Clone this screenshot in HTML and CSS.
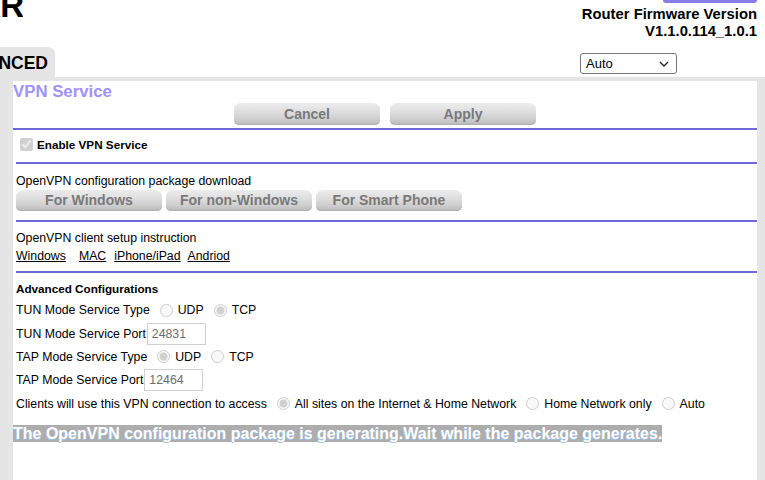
FILE: index.html
```html
<!DOCTYPE html>
<html>
<head>
<meta charset="utf-8">
<title>VPN Service</title>
<link rel="stylesheet" href="styles.css">
</head>
<body>
<header class="top">
  <div class="logo"><span>NETGEAR</span></div>
  <div class="fw">
    <div class="fw-bar"></div>
    <div class="fw-line">Router Firmware Version</div>
    <div class="fw-line">V1.1.0.114_1.0.1</div>
  </div>
</header>
<div class="tabrow">
  <div class="tab"><span>ADVANCED</span></div>
  <div class="lang">
    <select class="lang-sel"><option>Auto</option></select>
    <svg class="chev" width="10" height="6" viewBox="0 0 10 6"><path d="M1 1 L5 5 L9 1" fill="none" stroke="#222" stroke-width="1.4"/></svg>
  </div>
</div>
<div class="frame">
  <div class="panel">
    <div class="title">VPN Service</div>
    <div class="actions">
      <button class="btn btn-lg">Cancel</button>
      <button class="btn btn-lg">Apply</button>
    </div>
    <div class="rule"></div>
    <div class="body">
      <div class="enable">
        <input type="checkbox" checked disabled class="chk">
        <span class="b">Enable VPN Service</span>
      </div>
      <div class="rule"></div>
      <div class="sec sec-dl">
        <div class="line">OpenVPN configuration package download</div>
        <div class="btns">
          <button class="btn">For Windows</button>
          <button class="btn">For non-Windows</button>
          <button class="btn">For Smart Phone</button>
        </div>
      </div>
      <div class="rule"></div>
      <div class="sec sec-help">
        <div class="line">OpenVPN client setup instruction</div>
        <div class="links">
          <a href="#" class="l1">Windows</a>
          <a href="#" class="l2">MAC</a>
          <a href="#" class="l3">iPhone/iPad</a>
          <a href="#" class="l4">Andriod</a>
        </div>
      </div>
      <div class="rule"></div>
      <div class="sec sec-adv">
        <div class="line b">Advanced Configurations</div>
        <div class="rows">
          <div class="row r24">
            <span>TUN Mode Service Type</span>
            <input type="radio" name="tun" disabled class="rad"><span>UDP</span>
            <input type="radio" name="tun" disabled checked class="rad"><span>TCP</span>
          </div>
          <div class="row r23">
            <span>TUN Mode Service Port</span>
            <input type="text" class="port" value="24831" disabled>
          </div>
          <div class="row r23">
            <span>TAP Mode Service Type</span>
            <input type="radio" name="tap" disabled checked class="rad"><span>UDP</span>
            <input type="radio" name="tap" disabled class="rad"><span>TCP</span>
          </div>
          <div class="row r23">
            <span>TAP Mode Service Port</span>
            <input type="text" class="port" value="12464" disabled>
          </div>
          <div class="row r25">
            <span>Clients will use this VPN connection to access</span>
            <input type="radio" name="acc" disabled checked class="rad"><span>All sites on the Internet &amp; Home Network</span>
            <input type="radio" name="acc" disabled class="rad"><span>Home Network only</span>
            <input type="radio" name="acc" disabled class="rad"><span>Auto</span>
          </div>
        </div>
      </div>
    </div>
    <div class="msg"><span>The OpenVPN configuration package is generating.Wait while the package generates.</span></div>
  </div>
</div>
</body>
</html>
```

FILE: styles.css
```css
html, body {
  margin: 0;
  padding: 0;
  background: #fff;
}
body {
  font-family: "Liberation Sans", Arial, sans-serif;
  font-size: 12.3px;
  color: #000;
  width: 765px;
  overflow: hidden;
}
.top {
  display: flex;
  justify-content: space-between;
  height: 47px;
}
.logo {
  width: 23px;
  height: 18px;
  overflow: hidden;
  display: flex;
  justify-content: flex-end;
  font-weight: bold;
  font-size: 33px;
  line-height: 11px;
  white-space: nowrap;
  letter-spacing: -1px;
}
.logo span { flex: none; }
.fw {
  padding-right: 8px;
  display: flex;
  flex-direction: column;
  align-items: flex-end;
}
.fw-bar {
  width: 94px;
  height: 3px;
  background: #8a7ce9;
  border-radius: 0 0 4px 4px;
  margin-bottom: 3px;
}
.fw-line {
  font-weight: bold;
  font-size: 14.8px;
  line-height: 16.5px;
  white-space: nowrap;
}
.tabrow {
  display: flex;
  align-items: flex-end;
  height: 30px;
}
.tab {
  width: 55px;
  height: 30px;
  background: #e5e5e5;
  border-radius: 0 7px 0 0;
  display: flex;
  justify-content: flex-end;
  overflow: hidden;
  box-sizing: border-box;
  padding-right: 7px;
  font-weight: bold;
  font-size: 17.5px;
  line-height: 30px;
  white-space: nowrap;
}
.tab span { flex: none; padding-top: 1px; }
.lang {
  position: relative;
  margin-left: auto;
  margin-right: 88px;
  margin-bottom: 3px;
  width: 97px;
  height: 21px;
}
.lang-sel {
  appearance: none;
  -webkit-appearance: none;
  width: 97px;
  height: 21px;
  box-sizing: border-box;
  border: 1px solid #767676;
  border-radius: 3px;
  background: #fff;
  padding: 0 0 0 5px;
  font-family: "Liberation Sans", Arial, sans-serif;
  font-size: 13px;
  color: #000;
  margin: 0;
  display: block;
}
.chev {
  position: absolute;
  right: 8px;
  top: 8px;
  pointer-events: none;
}
.frame {
  background: #e5e5e5;
  padding: 4px 8px 0 13px;
}
.panel {
  background: #fff;
  min-height: 420px;
}
.title {
  font-weight: bold;
  font-size: 16.8px;
  line-height: 18px;
  padding-top: 2px;
  color: #9e92fb;
}
.actions {
  display: flex;
  justify-content: center;
  gap: 10px;
  margin-top: 2px;
  margin-bottom: 3px;
}
.btn {
  width: 146px;
  height: 21px;
  border: none;
  border-radius: 7px 7px 5px 5px;
  background: linear-gradient(#ececec 0%, #dcdcdc 45%, #cdcdcd 75%, #b9b9b9 100%);
  box-shadow: inset 0 -1px 0 #b0b0b0;
  font-family: "Liberation Sans", Arial, sans-serif;
  font-weight: bold;
  font-size: 14px;
  color: #797979;
  padding: 0;
  line-height: 21px;
}
.btn-lg { height: 22px; line-height: 22px; }
.rule {
  height: 2px;
  background: #6f66d8;
}
.body {
  padding-left: 3px;
}
.b {
  font-weight: bold;
  font-size: 11.7px;
}
.enable {
  display: flex;
  align-items: center;
  padding: 8px 0 11px 4px;
}
.chk {
  width: 13px;
  height: 13px;
  margin: 0 4px 0 0;
}
.sec-dl { padding: 10px 0 9px; }
.sec-help { padding: 9px 0 6px; }
.sec-adv { padding: 8px 0 0; }
.line {
  line-height: 15px;
  white-space: nowrap;
}
.btns {
  display: flex;
  gap: 4px;
  margin-top: 1px;
}
.links {
  line-height: 18px;
  margin-top: 1px;
  display: flex;
}
.links a { color: #000; text-decoration: underline; }
.l1 { margin-right: 13px; }
.l2 { margin-right: 8px; }
.l3 { margin-right: 7px; }
.rows {
  padding-top: 2px;
}
.row {
  display: flex;
  align-items: center;
  white-space: nowrap;
}
.r24 { height: 24px; }
.r23 { height: 23px; }
.r25 { height: 25px; }
.rad {
  width: 13px;
  height: 13px;
  margin: 0 5px 0 10px;
}
.port {
  width: 59px;
  height: 22px;
  box-sizing: border-box;
  margin-left: 1px;
  border: 1px solid #d0d0d0;
  background: #fff;
  color: #6d6d6d;
  font-family: "Liberation Sans", Arial, sans-serif;
  font-size: 12.3px;
  padding: 0 0 0 4px;
}
.msg {
  margin-top: 9px;
  font-weight: bold;
  font-size: 16px;
  white-space: nowrap;
}
.msg span {
  background: #adadad;
  color: #fff;
  text-shadow: -0.5px 0.5px 0 #9fc3ec;
}
```
